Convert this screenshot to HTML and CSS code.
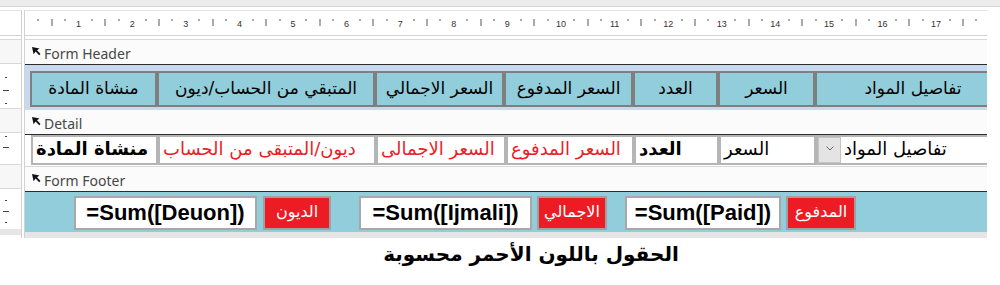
FILE: index.html
```html
<!DOCTYPE html>
<html lang="ar">
<head>
    <meta charset="UTF-8">
    <meta name="viewport" content="width=device-width, initial-scale=1.0">
    <title>Form Design</title>
    <link rel="stylesheet" href="styles.css">
</head>
<body>
  <div class="topband"></div>

  <div class="designer">
    <div class="side">
      <div class="corner"></div>
      <div class="vbar"></div>
      <div class="vsec vsec-head">
        <span class="tk"></span><span class="tk long"></span><span class="tk"></span>
      </div>
      <div class="vbar"></div>
      <div class="vsec vsec-detail">
        <span class="tk"></span><span class="tk long"></span>
      </div>
      <div class="vbar"></div>
      <div class="vsec vsec-foot">
        <span class="tk"></span><span class="tk long"></span><span class="tk"></span>
      </div>
      <div class="strip"></div>
    </div>

    <div class="canvas">
      <div class="hruler">
        <div class="cm"><div class="q"><span class="t"></span></div><div class="q"><span class="h"></span></div><div class="q"><span class="t"></span></div><div class="q"><span class="n">1</span></div></div>
        <div class="cm"><div class="q"><span class="t"></span></div><div class="q"><span class="h"></span></div><div class="q"><span class="t"></span></div><div class="q"><span class="n">2</span></div></div>
        <div class="cm"><div class="q"><span class="t"></span></div><div class="q"><span class="h"></span></div><div class="q"><span class="t"></span></div><div class="q"><span class="n">3</span></div></div>
        <div class="cm"><div class="q"><span class="t"></span></div><div class="q"><span class="h"></span></div><div class="q"><span class="t"></span></div><div class="q"><span class="n">4</span></div></div>
        <div class="cm"><div class="q"><span class="t"></span></div><div class="q"><span class="h"></span></div><div class="q"><span class="t"></span></div><div class="q"><span class="n">5</span></div></div>
        <div class="cm"><div class="q"><span class="t"></span></div><div class="q"><span class="h"></span></div><div class="q"><span class="t"></span></div><div class="q"><span class="n">6</span></div></div>
        <div class="cm"><div class="q"><span class="t"></span></div><div class="q"><span class="h"></span></div><div class="q"><span class="t"></span></div><div class="q"><span class="n">7</span></div></div>
        <div class="cm"><div class="q"><span class="t"></span></div><div class="q"><span class="h"></span></div><div class="q"><span class="t"></span></div><div class="q"><span class="n">8</span></div></div>
        <div class="cm"><div class="q"><span class="t"></span></div><div class="q"><span class="h"></span></div><div class="q"><span class="t"></span></div><div class="q"><span class="n">9</span></div></div>
        <div class="cm"><div class="q"><span class="t"></span></div><div class="q"><span class="h"></span></div><div class="q"><span class="t"></span></div><div class="q"><span class="n">10</span></div></div>
        <div class="cm"><div class="q"><span class="t"></span></div><div class="q"><span class="h"></span></div><div class="q"><span class="t"></span></div><div class="q"><span class="n">11</span></div></div>
        <div class="cm"><div class="q"><span class="t"></span></div><div class="q"><span class="h"></span></div><div class="q"><span class="t"></span></div><div class="q"><span class="n">12</span></div></div>
        <div class="cm"><div class="q"><span class="t"></span></div><div class="q"><span class="h"></span></div><div class="q"><span class="t"></span></div><div class="q"><span class="n">13</span></div></div>
        <div class="cm"><div class="q"><span class="t"></span></div><div class="q"><span class="h"></span></div><div class="q"><span class="t"></span></div><div class="q"><span class="n">14</span></div></div>
        <div class="cm"><div class="q"><span class="t"></span></div><div class="q"><span class="h"></span></div><div class="q"><span class="t"></span></div><div class="q"><span class="n">15</span></div></div>
        <div class="cm"><div class="q"><span class="t"></span></div><div class="q"><span class="h"></span></div><div class="q"><span class="t"></span></div><div class="q"><span class="n">16</span></div></div>
        <div class="cm"><div class="q"><span class="t"></span></div><div class="q"><span class="h"></span></div><div class="q"><span class="t"></span></div><div class="q"><span class="n">17</span></div></div>
        <div class="cm"><div class="q"><span class="t"></span></div><div class="q"><span class="h"></span></div><div class="q"><span class="t"></span></div><div class="q"></div></div>
      </div>

      <div class="bar">
        <svg class="bar-icon" width="9" height="9" viewBox="0 0 9 9"><path d="M0 0 L7.5 1.5 L5 3.2 L8.5 7 L7.2 8.3 L3.6 4.6 L1.6 7.2 Z" fill="#111"/></svg>
        <span>Form Header</span>
      </div>
      <div class="sec sec-head" dir="rtl">
        <div class="hbox w-item">تفاصيل المواد</div>
        <div class="hbox w-price">السعر</div>
        <div class="hbox w-qty">العدد</div>
        <div class="hbox w-paid">السعر المدفوع</div>
        <div class="hbox w-total">السعر الاجمالي</div>
        <div class="hbox w-rest">المتبقي من الحساب/ديون</div>
        <div class="hbox w-origin">منشاة المادة</div>
      </div>

      <div class="bar">
        <svg class="bar-icon" width="9" height="9" viewBox="0 0 9 9"><path d="M0 0 L7.5 1.5 L5 3.2 L8.5 7 L7.2 8.3 L3.6 4.6 L1.6 7.2 Z" fill="#111"/></svg>
        <span>Detail</span>
      </div>
      <div class="sec sec-detail" dir="rtl">
        <div class="dbox combo w-item2">
          <span>تفاصيل المواد</span>
          <span class="drop"><svg width="8" height="5" viewBox="0 0 8 5"><path d="M0.5 0.5 L4 4 L7.5 0.5" fill="none" stroke="#666" stroke-width="1"/></svg></span>
        </div>
        <div class="dbox w-price">السعر</div>
        <div class="dbox bold w-qty">العدد</div>
        <div class="dbox calc w-paid2">السعر المدفوع</div>
        <div class="dbox calc w-total2">السعر الاجمالى</div>
        <div class="dbox calc w-rest">ديون/المتبقى من الحساب</div>
        <div class="dbox bold w-origin">منشاة المادة</div>
      </div>

      <div class="bar">
        <svg class="bar-icon" width="9" height="9" viewBox="0 0 9 9"><path d="M0 0 L7.5 1.5 L5 3.2 L8.5 7 L7.2 8.3 L3.6 4.6 L1.6 7.2 Z" fill="#111"/></svg>
        <span>Form Footer</span>
      </div>
      <div class="sec sec-foot" dir="rtl">
        <div class="pair">
          <div class="flabel">المدفوع</div>
          <div class="fsum w-sum-paid">=Sum([Paid])</div>
        </div>
        <div class="pair pair-total">
          <div class="flabel">الاجمالي</div>
          <div class="fsum w-sum-total">=Sum([Ijmali])</div>
        </div>
        <div class="pair pair-debt">
          <div class="flabel narrow">الديون</div>
          <div class="fsum w-sum-debt">=Sum([Deuon])</div>
        </div>
      </div>
      <div class="strip"></div>
    </div>
  </div>

  <p class="caption" dir="rtl">الحقول باللون الأحمر محسوبة</p>
</body>
</html>
```

FILE: styles.css
```css
body {
  margin: 0;
  width: 1000px;
  height: 285px;
  overflow: hidden;
  background-color: #fff;
  font-family: "Liberation Sans", "DejaVu Sans", sans-serif;
}

.topband {
  height: 6px;
  background-color: #ececec;
  border-bottom: 1px solid #d6d6d6;
  margin-bottom: 3px;
}

.designer {
  display: flex;
  width: 988px;
}

/* left vertical ruler */
.side {
  width: 21px;
  border-right: 1px solid #d2d2d2;
  margin-right: 2px;
  display: flex;
  flex-direction: column;
}

.corner {
  height: 24px;
  border-top: 1px solid #e2e2e2;
  border-bottom: 1px solid #d2d2d2;
  margin-bottom: 3px;
}

.vbar {
  height: 23px;
  border-top: 1px solid #d8d8d8;
  border-bottom: 1px solid #d8d8d8;
  background-color: #f7f7f7;
}

.vsec {
  display: flex;
  flex-direction: column;
  align-items: center;
  width: 11px;
  box-sizing: border-box;
}

.vsec-head {
  height: 44px;
  padding-top: 13px;
  gap: 12px;
}

.vsec-detail {
  height: 31px;
  padding-top: 3px;
  gap: 10px;
}

.vsec-foot {
  height: 40px;
  padding-top: 11px;
  gap: 10px;
}

.tk {
  width: 2px;
  height: 1px;
  background-color: #444;
}

.tk.long {
  width: 6px;
}

.strip {
  height: 6px;
  background-color: #e6e6e6;
}

/* main design surface */
.canvas {
  width: 962px;
  border-left: 1px solid #d2d2d2;
  overflow: hidden;
  display: flex;
  flex-direction: column;
}

.hruler {
  display: flex;
  box-sizing: border-box;
  height: 26px;
  padding-bottom: 2px;
  border-top: 1px solid #e2e2e2;
  border-bottom: 1px solid #d2d2d2;
  margin-bottom: 3px;
}

.cm {
  flex: none;
  width: 53.6px;
  display: flex;
}

.q {
  flex: 1;
  display: flex;
  justify-content: flex-end;
  align-items: center;
}

.q span {
  transform: translateX(50%);
}

.t {
  width: 1px;
  height: 2px;
  margin-bottom: 4px;
  background-color: #555;
}

.h {
  width: 1px;
  height: 7px;
  background-color: #555;
}

.n {
  font-size: 9px;
  color: #333;
  margin-top: 3px;
}

.bar {
  height: 21px;
  border-top: 1px solid #d8d8d8;
  border-bottom: 1px solid #2b2b2b;
  background-color: #fbfbfb;
  display: flex;
  align-items: center;
  gap: 3px;
  padding-left: 7px;
  padding-top: 3px;
  box-sizing: content-box;
  font-family: "Noto Sans", "Open Sans", sans-serif;
  font-size: 14px;
  color: #474747;
}

.bar-icon {
  margin-top: -4px;
}

.sec {
  display: flex;
  box-sizing: border-box;
}

.sec-head {
  height: 44px;
  padding: 6px 0 2px 0;
  background-color: #c6d9ef;
}

.hbox {
  flex: none;
  box-sizing: border-box;
  height: 36px;
  border: 2px solid #7f7f7f;
  background-color: #92cddc;
  display: flex;
  align-items: center;
  justify-content: center;
  font-family: "DejaVu Sans", sans-serif;
  font-size: 17px;
  color: #000;
  padding-bottom: 3px;
}

.w-item { width: 196px; margin-right: -24px; }
.w-item2 { width: 195px; margin-right: -24px; }
.w-price { width: 97px; }
.w-qty { width: 85px; }
.w-paid { width: 129px; }
.w-total { width: 129px; }
.w-paid2 { width: 128px; }
.w-total2 { width: 130px; }
.w-rest { width: 218px; }
.w-origin { width: 127px; }

.sec-detail {
  height: 31px;
  background-color: #fff;
}

.dbox {
  flex: none;
  box-sizing: border-box;
  height: 30px;
  border: 2px solid #b5b5b5;
  background-color: #fff;
  display: flex;
  align-items: center;
  justify-content: flex-end;
  padding-left: 3px;
  padding-bottom: 3px;
  font-family: "DejaVu Sans", sans-serif;
  font-size: 18px;
  color: #000;
  white-space: nowrap;
  overflow: hidden;
}

.dbox.bold {
  font-weight: bold;
}

.dbox.calc {
  color: #ed1c24;
}

.combo {
  gap: 3px;
  padding-left: 0;
  padding-bottom: 0;
}

.combo span:first-child {
  padding-bottom: 3px;
}

.drop {
  flex: none;
  width: 23px;
  height: 26px;
  box-sizing: border-box;
  border: 1px solid #c4c4c4;
  background-color: #e4e4e4;
  display: flex;
  justify-content: center;
  padding-top: 8px;
}

.sec-foot {
  height: 40px;
  padding: 4px 131px 2px 0;
  background-color: #92cddc;
}

.pair {
  display: flex;
  gap: 5px;
}

.pair-total {
  margin-right: 18px;
}

.pair-debt {
  margin-right: 28px;
  gap: 6px;
}

.flabel {
  box-sizing: border-box;
  width: 70px;
  height: 34px;
  border: 2px solid #a0a0a0;
  background-color: #ed1c24;
  color: #fff;
  display: flex;
  align-items: center;
  justify-content: center;
  font-family: "DejaVu Sans", sans-serif;
  font-size: 16px;
  padding-bottom: 3px;
}

.flabel.narrow {
  width: 68px;
}

.fsum {
  box-sizing: border-box;
  height: 34px;
  border: 2px solid #a8a8a8;
  background-color: #fff;
  direction: ltr;
  display: flex;
  align-items: center;
  justify-content: center;
  font-family: "Liberation Sans", sans-serif;
  font-weight: bold;
  font-size: 22px;
  color: #000;
}

.w-sum-paid { width: 156px; }
.w-sum-total { width: 173px; }
.w-sum-debt { width: 183px; }

.caption {
  margin: 0;
  padding-left: 62px;
  text-align: center;
  font-family: "DejaVu Sans", sans-serif;
  font-weight: bold;
  font-size: 20px;
  line-height: 32px;
  color: #000;
}
```
